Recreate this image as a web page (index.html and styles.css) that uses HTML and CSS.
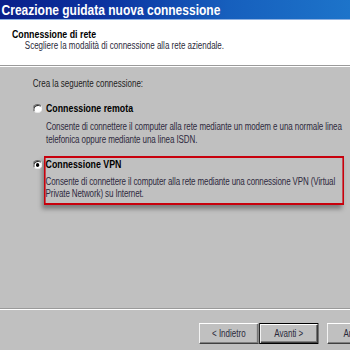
FILE: index.html
```html
<!DOCTYPE html>
<html>
<head>
<meta charset="utf-8">
<link rel="stylesheet" href="styles.css">
</head>
<body>
<div class="window">
  <div class="titlebar">Creazione guidata nuova connessione</div>
  <div class="header">
    <div class="h-title">Connessione di rete</div>
    <div class="h-sub">Scegliere la modalità di connessione alla rete aziendale.</div>
  </div>
  <div class="sep"></div>
  <div class="content">
    <div class="intro">Crea la seguente connessione:</div>
    <div class="option">
      <span class="radio"></span>
      <div class="opt-body">
        <div class="opt-label">Connessione remota</div>
        <div class="opt-desc">Consente di connettere il computer alla rete mediante un modem e una normale linea telefonica oppure mediante una linea ISDN.</div>
      </div>
    </div>
    <div class="option option-vpn">
      <span class="radio checked"></span>
      <div class="opt-body highlight">
        <div class="opt-label">Connessione VPN</div>
        <div class="opt-desc">Consente di connettere il computer alla rete mediante una connessione VPN (Virtual Private Network) su Internet.</div>
      </div>
    </div>
  </div>
  <div class="sep"></div>
  <div class="buttons">
    <div class="btn">&lt; Indietro</div>
    <div class="btn default">Avanti &gt;</div>
    <div class="btn">Annulla</div>
  </div>
</div>
</body>
</html>
```
FILE: styles.css
```css
html, body {
  margin: 0;
  padding: 0;
  overflow: hidden;
}
body {
  font-family: "Liberation Sans", Arial, sans-serif;
  background: #c0c0c0;
  width: 350px;
  height: 350px;
}
/* the reference dialog is horizontally compressed: lay out at 437.5px and squeeze to 350px */
.window {
  width: 437.5px;
  height: 350px;
  overflow: hidden;
  background: #c0c0c0;
  display: flex;
  flex-direction: column;
  transform: scaleX(0.8);
  transform-origin: 0 0;
}
.titlebar {
  height: 19px;
  flex: none;
  background: linear-gradient(to right, #0a1f8a 0%, #0c33a0 30%, #165fbd 65%, #1d74ca 100%);
  border-bottom: 1px solid #8fb2e2;
  color: #fff;
  font-weight: bold;
  font-size: 15px;
  line-height: 19px;
  padding-left: 2px;
  white-space: nowrap;
}
.header {
  height: 45px;
  flex: none;
  background: #fff;
  box-sizing: border-box;
  padding: 9px 0 0 15px;
}
.h-title {
  font-weight: bold;
  font-size: 11px;
  line-height: 11px;
  color: #000;
}
.h-sub {
  font-size: 10px;
  line-height: 12px;
  color: #2a2a3a;
  padding-left: 16px;
}
.sep {
  flex: none;
  height: 0;
  border-top: 1px solid #9a9a9a;
  border-bottom: 1px solid #fff;
}
.content {
  flex: 1;
  padding: 11px 0 0 41px;
}
.intro {
  font-size: 10px;
  line-height: 12px;
  color: #222;
}
.option {
  display: flex;
  align-items: flex-start;
  margin-top: 12px;
}
.option-vpn {
  margin-top: 10px;
}
.radio {
  flex: none;
  box-sizing: border-box;
  width: 11.5px;
  height: 9px;
  margin-top: 2px;
  margin-right: 5px;
  border-radius: 50%;
  background: #fff;
  border: 1px solid;
  border-color: #6a6a6a #e8e8e8 #e8e8e8 #6a6a6a;
  box-shadow: inset 1px 1px 0 #303030;
  position: relative;
}
.option-vpn .radio {
  margin-top: 4px;
}
.radio.checked::after {
  content: "";
  position: absolute;
  left: 3px;
  top: 2px;
  width: 4px;
  height: 3.5px;
  border-radius: 50%;
  background: #000;
}
.opt-body {
  width: 380px;
}
.opt-label {
  font-weight: bold;
  font-size: 11px;
  line-height: 12px;
  color: #000;
}
.opt-desc {
  font-size: 10px;
  line-height: 13px;
  color: #2e2a3e;
  margin-top: 6px;
  letter-spacing: -0.1px;
}
.highlight {
  border: 2px solid #c8000c;
  box-sizing: border-box;
  width: 375px;
  margin-left: -2.5px;
  padding: 0 0 3px 0;
  box-shadow: -3px 4px 5px rgba(0, 0, 0, 0.35);
}
.highlight .opt-desc {
  margin-top: 6px;
  line-height: 12px;
  letter-spacing: -0.14px;
}
.buttons {
  flex: none;
  height: 40px;
  display: flex;
  gap: 1px;
  padding: 13px 0 0 249px;
  box-sizing: border-box;
}
.btn {
  flex: none;
  width: 74px;
  height: 21px;
  box-sizing: border-box;
  border: 1px solid;
  border-color: #fff #404040 #404040 #fff;
  box-shadow: inset -1px -1px 0 #808080;
  font-size: 10px;
  line-height: 19px;
  text-align: center;
  color: #2a2a3a;
}
.btn.default {
  border: 1px solid #000;
  box-shadow: inset 1px 1px 0 #fff, inset -1px -1px 0 #404040, inset -2px -2px 0 #808080;
}
.btn + .btn + .btn {
  margin-left: 10px;
}
```
